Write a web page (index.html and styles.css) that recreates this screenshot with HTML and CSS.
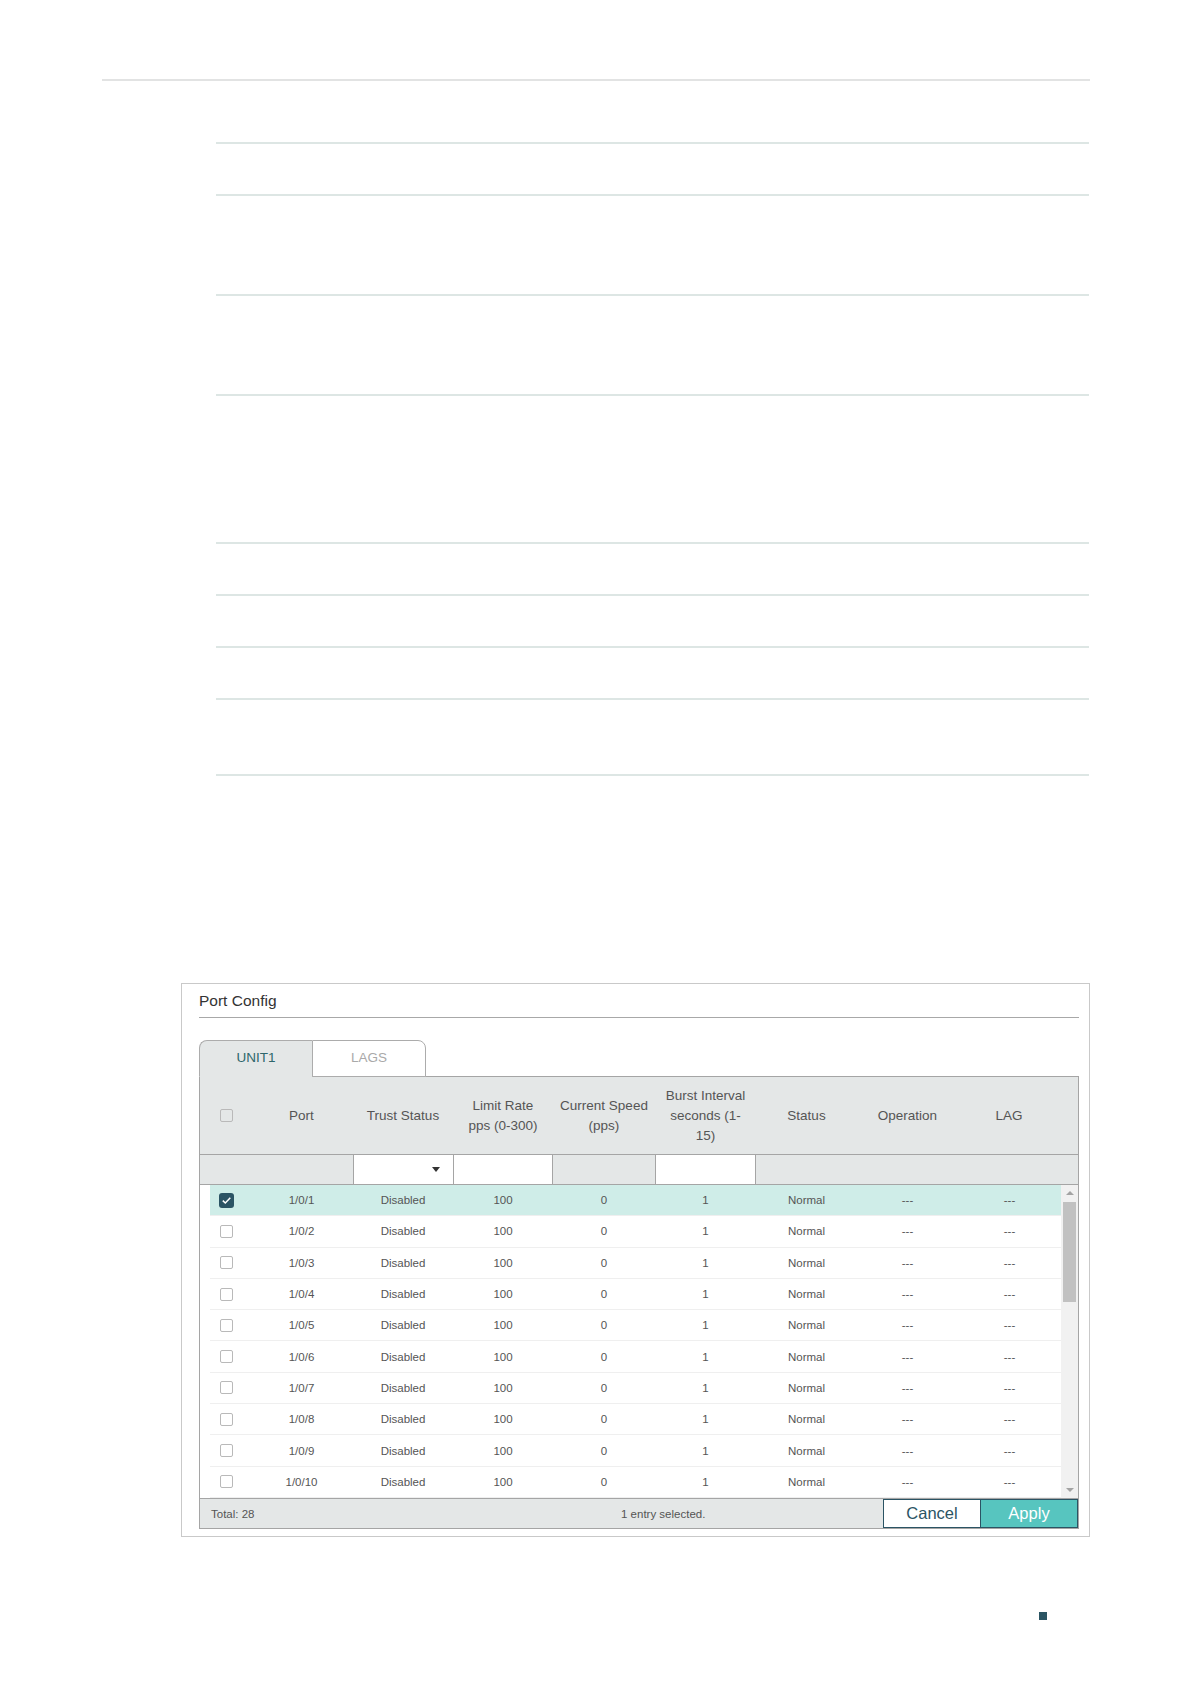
FILE: index.html
```html
<!DOCTYPE html>
<html lang="en">

<head>
    <meta charset="UTF-8">
    <meta name="viewport" content="width=device-width, initial-scale=1.0">
    <title>Port Config</title>
    <link rel="stylesheet" href="styles.css">
</head>

<body>
    <div class="doc">
        <div class="doc-rule"></div>
        <div class="doc-table">
            <div class="doc-row h63"></div>
            <div class="doc-row h52"></div>
            <div class="doc-row h100"></div>
            <div class="doc-row h100"></div>
            <div class="doc-row h148"></div>
            <div class="doc-row h52"></div>
            <div class="doc-row h52"></div>
            <div class="doc-row h52"></div>
            <div class="doc-row h76"></div>
        </div>
    </div>

    <div class="panel">
        <div class="panel-title">Port Config</div>

        <div class="tabs">
            <div class="tab active">UNIT1</div>
            <div class="tab">LAGS</div>
        </div>

        <div class="grid">
            <div class="grid-head">
                <div class="cell-check"><span class="check"></span></div>
                <div>Port</div>
                <div>Trust Status</div>
                <div>Limit Rate<br>pps (0-300)</div>
                <div>Current Speed<br>(pps)</div>
                <div>Burst Interval<br>seconds (1-<br>15)</div>
                <div>Status</div>
                <div>Operation</div>
                <div>LAG</div>
            </div>

            <div class="grid-filter">
                <div class="span-2"></div>
                <div class="filter-box select"><span class="caret"></span></div>
                <div class="filter-box last"></div>
                <div></div>
                <div class="filter-box last"></div>
                <div class="span-rest"></div>
            </div>

            <div class="grid-body">
                <div class="rows">
                    <div class="row selected">
                        <div class="cell-check"><span class="check on"><svg viewBox="0 0 15 15"><path d="M3.8 7.6l2.5 2.4 5-5.3" /></svg></span></div>
                        <div>1/0/1</div><div>Disabled</div><div>100</div><div>0</div><div>1</div><div>Normal</div><div>---</div><div>---</div>
                    </div>
                    <div class="row">
                        <div class="cell-check"><span class="check"></span></div>
                        <div>1/0/2</div><div>Disabled</div><div>100</div><div>0</div><div>1</div><div>Normal</div><div>---</div><div>---</div>
                    </div>
                    <div class="row">
                        <div class="cell-check"><span class="check"></span></div>
                        <div>1/0/3</div><div>Disabled</div><div>100</div><div>0</div><div>1</div><div>Normal</div><div>---</div><div>---</div>
                    </div>
                    <div class="row">
                        <div class="cell-check"><span class="check"></span></div>
                        <div>1/0/4</div><div>Disabled</div><div>100</div><div>0</div><div>1</div><div>Normal</div><div>---</div><div>---</div>
                    </div>
                    <div class="row">
                        <div class="cell-check"><span class="check"></span></div>
                        <div>1/0/5</div><div>Disabled</div><div>100</div><div>0</div><div>1</div><div>Normal</div><div>---</div><div>---</div>
                    </div>
                    <div class="row">
                        <div class="cell-check"><span class="check"></span></div>
                        <div>1/0/6</div><div>Disabled</div><div>100</div><div>0</div><div>1</div><div>Normal</div><div>---</div><div>---</div>
                    </div>
                    <div class="row">
                        <div class="cell-check"><span class="check"></span></div>
                        <div>1/0/7</div><div>Disabled</div><div>100</div><div>0</div><div>1</div><div>Normal</div><div>---</div><div>---</div>
                    </div>
                    <div class="row">
                        <div class="cell-check"><span class="check"></span></div>
                        <div>1/0/8</div><div>Disabled</div><div>100</div><div>0</div><div>1</div><div>Normal</div><div>---</div><div>---</div>
                    </div>
                    <div class="row">
                        <div class="cell-check"><span class="check"></span></div>
                        <div>1/0/9</div><div>Disabled</div><div>100</div><div>0</div><div>1</div><div>Normal</div><div>---</div><div>---</div>
                    </div>
                    <div class="row">
                        <div class="cell-check"><span class="check"></span></div>
                        <div>1/0/10</div><div>Disabled</div><div>100</div><div>0</div><div>1</div><div>Normal</div><div>---</div><div>---</div>
                    </div>
                </div>
                <div class="scroll">
                    <span class="scroll-up"></span>
                    <span class="scroll-thumb"></span>
                    <span class="scroll-down"></span>
                </div>
            </div>

            <div class="grid-foot">
                <span class="total">Total: 28</span>
                <span class="picked">1 entry selected.</span>
                <button type="button" class="btn cancel">Cancel</button>
                <button type="button" class="btn apply">Apply</button>
            </div>
        </div>
    </div>

    <div class="page-mark"></div>
</body>

</html>
```

FILE: styles.css
```css
body {
    margin: 0;
    background: #fff;
    font-family: "Liberation Sans", Arial, sans-serif;
    color: #555;
}

/* empty document table above the screenshot */
.doc {
    padding-top: 79px;
}

.doc-rule {
    margin-left: 102px;
    width: 988px;
    border-top: 2px solid #e2e3e3;
}

.doc-table {
    margin-left: 216px;
    width: 873px;
}

.doc-row {
    box-sizing: border-box;
    border-bottom: 2px solid #dde6e4;
}

.h52 { height: 52px; }
.h63 { height: 63px; }
.h76 { height: 76px; }
.h100 { height: 100px; }
.h148 { height: 148px; }

/* panel */
.panel {
    box-sizing: border-box;
    width: 909px;
    margin: 207px 0 0 181px;
    padding: 7px 10px 7px 17px;
    border: 1px solid #c9c9c9;
}

.panel-title {
    font-size: 15.5px;
    line-height: 20px;
    color: #333;
    padding-bottom: 6px;
    border-bottom: 1px solid #a8a8a8;
}

.tabs {
    display: flex;
    margin-top: 22px;
    margin-bottom: -1px;
}

.tab {
    position: relative;
    box-sizing: border-box;
    width: 114px;
    height: 37px;
    border: 1px solid #acacac;
    border-radius: 0 8px 0 0;
    background: #fff;
    color: #a9a9a9;
    font-size: 13.5px;
    line-height: 34px;
    text-align: center;
}

.tab.active {
    z-index: 1;
    width: 113px;
    border-right: none;
    border-bottom-color: #e4e7e7;
    border-radius: 8px 0 0 0;
    background: #e4e7e7;
    color: #2e666b;
}

/* table */
.grid {
    border: 1px solid #a5a5a5;
}

.grid-head,
.grid-filter {
    display: grid;
    grid-template-columns: 50px 103px 100px 100px 102px 101px 101px 101px 1fr;
    padding-right: 18px;
    background: #e4e7e7;
}

.grid-head {
    height: 77px;
    align-items: center;
    text-align: center;
    font-size: 13.5px;
    line-height: 20px;
    color: #555;
}

.cell-check {
    display: flex;
    padding-left: 20px;
}

.check {
    box-sizing: border-box;
    width: 13px;
    height: 13px;
    border: 1px solid #b9b9b9;
    border-radius: 2px;
    background: #fff;
}

.grid-head .check {
    background: transparent;
}

.check.on {
    width: 15px;
    height: 15px;
    margin-left: -1px;
    border: none;
    border-radius: 3px;
    background: #2b5464;
}

.check svg {
    display: block;
    width: 15px;
    height: 15px;
}

.check path {
    fill: none;
    stroke: #fff;
    stroke-width: 1.5;
}

.grid-filter {
    box-sizing: border-box;
    height: 31px;
    border-top: 1px solid #a5a5a5;
    border-bottom: 1px solid #a5a5a5;
}

.span-2 {
    grid-column: span 2;
}

.span-rest {
    grid-column: span 3;
}

.filter-box {
    background: #fff;
    border-left: 1px solid #a5a5a5;
}

.filter-box.last {
    border-right: 1px solid #a5a5a5;
}

.filter-box.select {
    display: flex;
    align-items: center;
    justify-content: flex-end;
    padding-right: 13px;
}

.caret {
    border-style: solid;
    border-width: 5px 4px 0;
    border-color: #333 transparent transparent;
}

.grid-body {
    display: flex;
    height: 313px;
}

.rows {
    flex: 1;
    margin-left: 10px;
    overflow: hidden;
}

.row {
    box-sizing: border-box;
    display: grid;
    grid-template-columns: 40px 103px 100px 100px 102px 101px 101px 101px 1fr;
    align-items: center;
    height: 31.3px;
    border-bottom: 1px solid #efefef;
    text-align: center;
    font-size: 11.5px;
    color: #555;
}

.row .cell-check {
    padding-left: 10px;
}

.row.selected {
    background: #cfede8;
}

.scroll {
    display: flex;
    flex-direction: column;
    align-items: center;
    width: 17px;
    background: #f1f1f1;
}

.scroll-up {
    margin-top: 6px;
    border-style: solid;
    border-width: 0 4px 4px;
    border-color: transparent transparent #a3a3a3;
}

.scroll-thumb {
    width: 13px;
    height: 100px;
    margin-top: 7px;
    background: #c1c1c1;
}

.scroll-down {
    margin-top: auto;
    margin-bottom: 6px;
    border-style: solid;
    border-width: 4px 4px 0;
    border-color: #a3a3a3 transparent transparent;
}

.grid-foot {
    box-sizing: border-box;
    display: flex;
    align-items: center;
    height: 30px;
    padding-left: 11px;
    border-top: 1px solid #a5a5a5;
    background: #e4e7e7;
    font-size: 11.5px;
    color: #555;
}

.total {
    width: 410px;
}

.picked {
    flex: 1;
}

.btn {
    box-sizing: border-box;
    height: 29px;
    margin: 0;
    padding: 0;
    font-family: inherit;
    font-size: 16.5px;
    cursor: pointer;
}

.btn.cancel {
    width: 98px;
    border: 1px solid #2b5464;
    background: #fff;
    color: #2b5464;
}

.btn.apply {
    width: 97px;
    border: 1px solid #2b5464;
    border-left: none;
    background: #57c5bf;
    color: #fff;
}

.page-mark {
    width: 8px;
    height: 8px;
    margin: 75px 0 0 1039px;
    background: #2b5563;
}
```
